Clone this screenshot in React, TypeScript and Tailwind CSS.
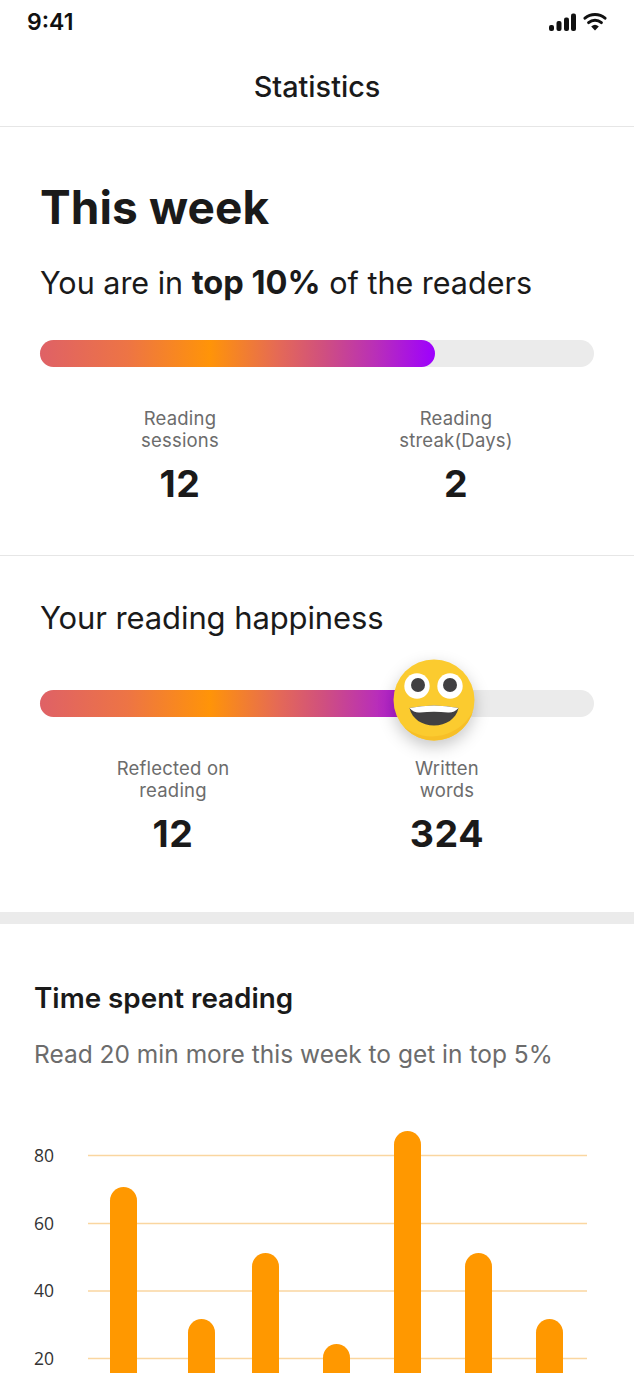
const barGradient =
  'bg-[linear-gradient(90deg,#df6166_0%,#ed7445_22%,#ff9408_43%,#e56a55_60%,#cf4f80_72%,#b92fb8_85%,#9d00ff_100%)]';

const bars = [
  { x: 110, top: 1187 },
  { x: 188, top: 1319 },
  { x: 252, top: 1253 },
  { x: 323, top: 1344 },
  { x: 394, top: 1131 },
  { x: 465, top: 1253 },
  { x: 536, top: 1319 },
];

const ticks = [
  { label: '80', y: 1155.5 },
  { label: '60', y: 1223.5 },
  { label: '40', y: 1291 },
  { label: '20', y: 1358.5 },
];

function StatusIcons() {
  return (
    <svg width="58" height="18" viewBox="0 0 58 18">
      <rect x="0" y="12" width="5" height="6" rx="2" fill="#111" />
      <rect x="7.5" y="8" width="5" height="10" rx="2" fill="#111" />
      <rect x="15" y="4.5" width="5" height="13.5" rx="2" fill="#111" />
      <rect x="22" y="0.5" width="5" height="17.5" rx="2" fill="#111" />
      <path d="M36 5.2a15.5 15.5 0 0 1 20 0" fill="none" stroke="#111" strokeWidth="3" strokeLinecap="round" />
      <path d="M39.6 9.6a10 10 0 0 1 12.8 0" fill="none" stroke="#111" strokeWidth="3" strokeLinecap="round" />
      <path d="M42.2 13.4a6 6 0 0 1 7.6 0L46 17.6z" fill="#111" />
    </svg>
  );
}

function Stat({ label, second, value, width }: { label: string; second: string; value: string; width: string }) {
  return (
    <div className={`${width} flex flex-col items-center`}>
      <p className="text-[18.5px] leading-[22px] tracking-[0.2px] text-[#6c6c6c] text-center">
        {label}
        <br />
        {second}
      </p>
      <p className="mt-[11px] text-[37.5px] leading-[44px] font-bold text-[#1a1a1a] tracking-[0.6px]">{value}</p>
    </div>
  );
}

function Emoji() {
  return (
    <svg width="84" height="84" viewBox="-42 -42 84 84">
      <circle cx="0" cy="0" r="40.5" fill="#fbcb2f" />
      <path d="M-30 27A40.5 40.5 0 0 0 39 11 46 46 0 0 1 -30 27z" fill="#f7bf27" />
      <circle cx="-17" cy="-14" r="12.7" fill="#fff" />
      <circle cx="16" cy="-14" r="12.7" fill="#fff" />
      <circle cx="-16" cy="-15" r="7" fill="#414042" />
      <circle cx="16" cy="-15" r="7" fill="#414042" />
      <path d="M-24.5 8Q0 3 24.5 8C22 19 12 25.5 0 25.5S-22 19 -24.5 8z" fill="#414042" />
      <path d="M-24.5 8Q0 3 24.5 8Q20 13 14 12.5Q0 11 -14 12.5Q-20 13 -24.5 8z" fill="#fff" />
    </svg>
  );
}

function Chart() {
  return (
    <svg width="634" height="293" viewBox="0 1080 634 293" className="block">
      {ticks.map((t) => (
        <g key={t.label}>
          <line x1="88" x2="587" y1={t.y} y2={t.y} stroke="#fad6a0" strokeWidth="1.6" />
          <text x="34" y={t.y + 6} fontSize="17.5" fill="#333333" fontFamily="'Open Sans', sans-serif">
            {t.label}
          </text>
        </g>
      ))}
      {bars.map((b) => (
        <rect key={b.x} x={b.x} y={b.top} width="27" height={1400 - b.top} rx="13.5" fill="#ff9800" />
      ))}
    </svg>
  );
}

export default function App() {
  return (
    <div className="w-[634px] h-[1373px] overflow-hidden bg-white text-[#1a1a1a] font-['Inter',sans-serif]">
      <div className="h-[48px] px-[27px] pt-[8px] flex justify-between items-start">
        <span className="text-[23px] leading-[28px] font-semibold text-[#111]">9:41</span>
        <div className="pt-[5px]">
          <StatusIcons />
        </div>
      </div>
      <header className="h-[79px] border-b border-[#e6e6e6] flex justify-center pt-[20px]">
        <h1 className="text-[28.8px] leading-[38px] font-medium">Statistics</h1>
      </header>

      <section className="h-[429px] border-b border-[#e6e6e6] px-[40px] pt-[50px]">
        <h2 className="text-[46px] leading-[60px] font-bold tracking-[0.1px]">This week</h2>
        <p className="mt-[25px] text-[30.5px] leading-[40px] whitespace-nowrap">
          You are in <b className="text-[32.6px] font-bold">top 10%</b> of the readers
        </p>
        <div className="mt-[37px] h-[27px] rounded-full bg-[#ebebeb]">
          <div className={`h-full w-[395px] rounded-full ${barGradient}`} />
        </div>
        <div className="mt-[40px] flex pl-[2px]">
          <Stat label="Reading" second="sessions" value="12" width="w-[276px]" />
          <Stat label="Reading" second="streak(Days)" value="2" width="w-[276px]" />
        </div>
      </section>

      <section className="h-[356px] px-[40px] pt-[42px]">
        <p className="text-[31px] leading-[40px] tracking-[-0.1px]">Your reading happiness</p>
        <div className="relative mt-[52px] h-[27px] rounded-full bg-[#ebebeb]">
          <div className={`h-full w-[395px] rounded-full ${barGradient}`} />
          <div className="absolute left-[352px] top-[-32px] drop-shadow-[0_6px_8px_rgba(0,0,0,0.22)]">
            <Emoji />
          </div>
        </div>
        <div className="mt-[40px] flex ml-[-5px]">
          <Stat label="Reflected on" second="reading" value="12" width="w-[276px]" />
          <Stat label="Written" second="words" value="324" width="w-[272px]" />
        </div>
      </section>

      <div className="h-[12px] bg-[#ebebeb]" />

      <section className="pt-[56px]">
        <h3 className="px-[34px] text-[27.8px] leading-[36px] font-semibold">Time spent reading</h3>
        <p className="mt-[21px] px-[34px] text-[24.5px] leading-[34px] text-[#6c6c6c]">
          Read 20 min more this week to get in top 5%
        </p>
        <div className="mt-[9px]">
          <Chart />
        </div>
      </section>
    </div>
  );
}
